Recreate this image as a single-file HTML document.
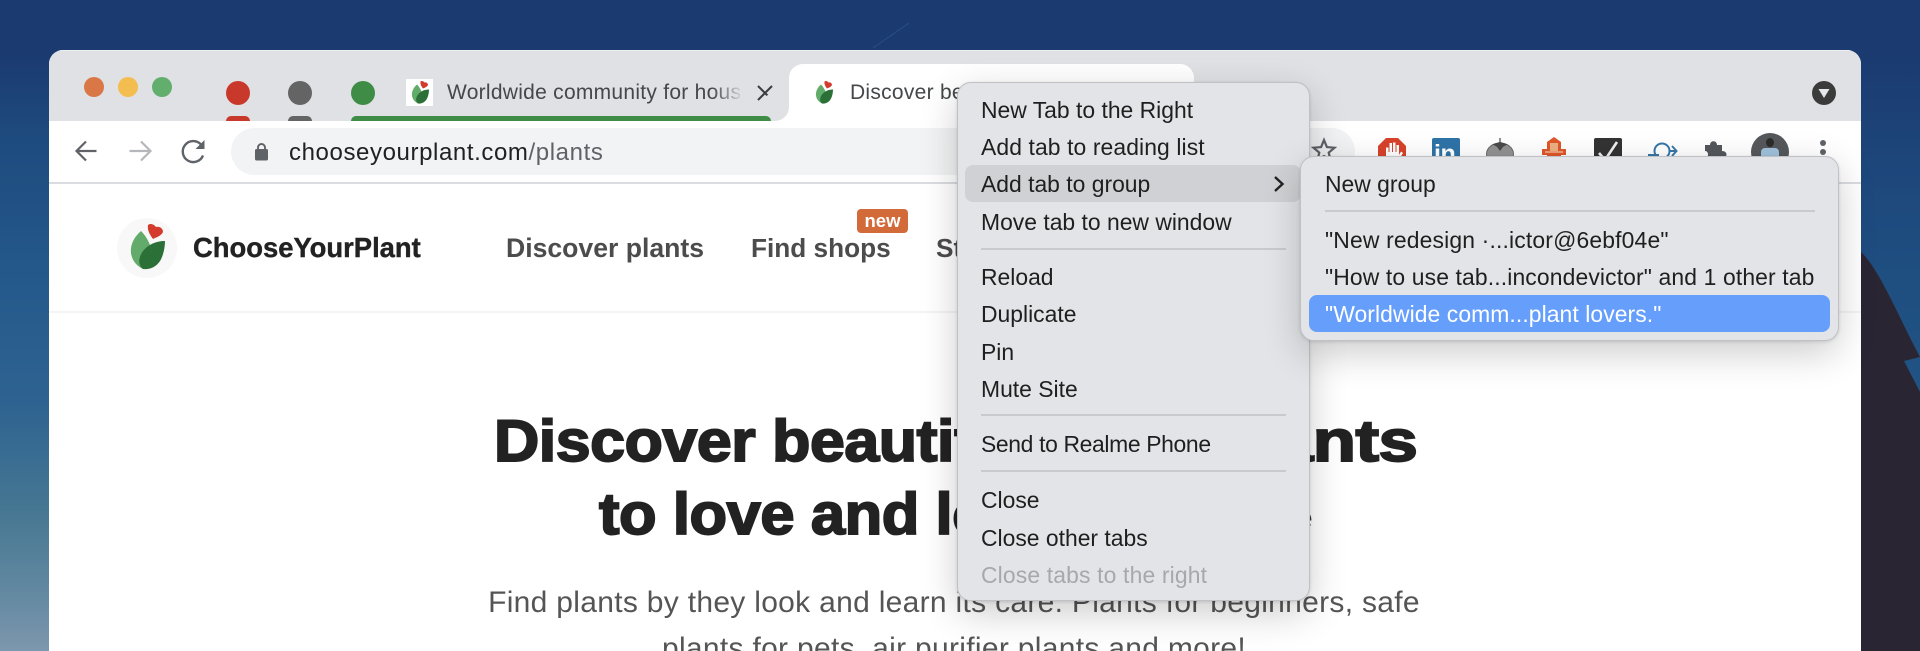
<!DOCTYPE html>
<html lang="en">
<head>
<meta charset="utf-8">
<title>ChooseYourPlant</title>
<style>
html,body{margin:0;padding:0;width:1920px;height:651px;overflow:hidden;background:#1a3a70}
body{position:relative;font-family:"Liberation Sans",Arial,sans-serif}
.a{position:absolute;white-space:nowrap}
svg{position:absolute;overflow:visible}
#win{position:absolute;left:49px;top:50px;width:1812px;height:601px;background:#fff;border-radius:14px 14px 0 0;overflow:hidden}
.t{position:absolute;white-space:nowrap;line-height:30px;color:#1f1f1f;font-size:22.9px}
.sep{position:absolute;height:2px;background:#c9cacd}
.menu{position:absolute;background:#e2e4e7;border:1px solid #c0c1c4;box-sizing:border-box;border-radius:14px;box-shadow:0 12px 38px rgba(0,0,0,.2),0 1px 3px rgba(0,0,0,.12)}
.h{font-size:58px;font-weight:bold;line-height:70px;color:#222;-webkit-text-stroke:1.9px #222;letter-spacing:-.4px}
</style>
</head>
<body>
<!-- wallpaper -->
<svg style="left:0;top:0;overflow:hidden" width="1920" height="651" viewBox="0 0 1920 651">
<defs>
<linearGradient id="l" x1="0" y1="0" x2="0" y2="1">
<stop offset="0" stop-color="#1a3a70"/><stop offset=".08" stop-color="#1a3a70"/><stop offset=".2" stop-color="#1e4a7e"/><stop offset=".45" stop-color="#255a8c"/><stop offset=".62" stop-color="#2e6391"/><stop offset=".78" stop-color="#457692"/><stop offset=".92" stop-color="#658aa2"/><stop offset="1" stop-color="#7d97ae"/>
</linearGradient>
<linearGradient id="r" x1="0" y1="0" x2="0" y2="1">
<stop offset="0" stop-color="#1a3a70"/><stop offset=".13" stop-color="#1a3a70"/><stop offset=".5" stop-color="#1e4a7e"/><stop offset="1" stop-color="#205484"/>
</linearGradient>
</defs>
<rect width="1920" height="651" fill="#1a3a70"/>
<rect x="0" y="0" width="49" height="651" fill="url(#l)"/>
<rect x="1861" y="0" width="59" height="400" fill="url(#r)"/>
<path d="M1861 252C1880 270 1900 320 1920 357L1904 361L1920 392V651H1861Z" fill="#292532"/>
<path d="M873 48L909 23" stroke="#2a4f85" stroke-width="1" fill="none"/>
</svg>

<div id="win">
  <div style="position:absolute;left:0;top:0;width:1812px;height:71px;background:#dfe1e5;border-top:1px solid #eceef0;box-sizing:border-box"></div>
  <div style="position:absolute;left:0;top:71px;width:1812px;height:61px;background:#fff"></div>
  <div style="position:absolute;left:0;top:132px;width:1812px;height:2px;background:#dadce0"></div>
  <div style="position:absolute;left:0;top:261px;width:1812px;height:2px;background:#f4f4f4"></div>
</div>

<!-- traffic lights -->
<div class="a" style="left:84px;top:77px;width:20px;height:20px;border-radius:50%;background:#da7747"></div>
<div class="a" style="left:118px;top:77px;width:20px;height:20px;border-radius:50%;background:#f4bd4f"></div>
<div class="a" style="left:152px;top:77px;width:20px;height:20px;border-radius:50%;background:#62ae6c"></div>

<!-- tab groups -->
<div class="a" style="left:226px;top:81px;width:24px;height:24px;border-radius:50%;background:#c9392b"></div>
<div class="a" style="left:288px;top:81px;width:24px;height:24px;border-radius:50%;background:#646464"></div>
<div class="a" style="left:351px;top:81px;width:24px;height:24px;border-radius:50%;background:#3f8c47"></div>
<div class="a" style="left:226px;top:116px;width:24px;height:5px;border-radius:6px 6px 0 0;background:#c9392b"></div>
<div class="a" style="left:288px;top:116px;width:24px;height:5px;border-radius:6px 6px 0 0;background:#646464"></div>

<!-- inactive tab -->
<div class="a" style="left:406px;top:79px;width:27px;height:27px;background:#fff"></div>
<svg style="left:405px;top:78px" width="30" height="30" viewBox="0 0 60 60">
  <path d="M24 13C17 19 13 27 14 35C15 43 20 48 26 51L34 30C32 23 28 17 24 13Z" fill="#62ab6b"/>
  <path d="M48 23C38 23 31 27 26 33C21 40 21 47 26 51C35 52 42 47 45 39C47 34 48 28 48 23Z" fill="#2a7037"/>
  <path d="M31 7C33 5 37 6 39 9C42 8 46 10 46 14C44 18 40 19 36 21C33 17 30 12 31 7Z" fill="#d33c2c"/>
</svg>
<div class="a" style="left:447px;top:78px;width:296px;overflow:hidden;font-size:21px;letter-spacing:.27px;line-height:30px;color:#454749">Worldwide community for hous</div>
<div class="a" style="left:712px;top:78px;width:32px;height:30px;background:linear-gradient(90deg,rgba(223,225,229,0),#dfe1e5)"></div>
<svg style="left:756.5px;top:85px" width="16" height="16" viewBox="0 0 16 16"><path d="M1 1L15 15M15 1L1 15" stroke="#3c3e41" stroke-width="2.1" fill="none"/></svg>

<!-- active tab -->
<div class="a" style="left:775px;top:107px;width:14px;height:14px;background:#fff"></div>
<div class="a" style="left:761px;top:93px;width:28px;height:28px;border-radius:50%;background:#dfe1e5"></div>
<div class="a" style="left:351px;top:116px;width:420px;height:5px;border-radius:6px 6px 0 0;background:#3f8c47"></div>
<div class="a" style="left:789px;top:64px;width:405px;height:57px;background:#fff;border-radius:14px 14px 0 0"></div>
<svg style="left:809px;top:78px" width="30" height="30" viewBox="0 0 60 60">
  <path d="M24 13C17 19 13 27 14 35C15 43 20 48 26 51L34 30C32 23 28 17 24 13Z" fill="#62ab6b"/>
  <path d="M48 23C38 23 31 27 26 33C21 40 21 47 26 51C35 52 42 47 45 39C47 34 48 28 48 23Z" fill="#2a7037"/>
  <path d="M31 7C33 5 37 6 39 9C42 8 46 10 46 14C44 18 40 19 36 21C33 17 30 12 31 7Z" fill="#d33c2c"/>
</svg>
<div class="a" style="left:850px;top:78px;font-size:21px;letter-spacing:.27px;line-height:30px;color:#454749">Discover beautiful</div>

<!-- tab search button -->
<div class="a" style="left:1812px;top:81px;width:24px;height:24px;border-radius:50%;background:#3b3b3b"></div>
<svg style="left:1812px;top:81px" width="24" height="24" viewBox="0 0 24 24"><path d="M6.500 8H17.500L12 17Z" fill="#e6e7ea"/></svg>

<!-- toolbar -->
<svg style="left:70px;top:135px" width="140" height="32" viewBox="0 0 140 32">
  <path d="M26.500 16H7M16 6.500L6.500 16L16 25.500" stroke="#5f6368" stroke-width="2.200" fill="none"/>
  <path d="M59.500 16H80M71 6.500L80.500 16L71 25.500" stroke="#b5b7ba" stroke-width="2.200" fill="none"/>
  <path d="M133 20.500A10.500 10.500 0 1 1 131 9.500" stroke="#5f6368" stroke-width="2.400" fill="none"/>
  <path d="M134.500 5V14H125.500Z" fill="#5f6368"/>
</svg>
<div class="a" style="left:231px;top:128px;width:1124px;height:47px;border-radius:24px;background:#f1f3f4"></div>
<svg style="left:253px;top:141px" width="17" height="20" viewBox="0 0 17 20">
  <path d="M5 9V6.500A3.500 3.500 0 0 1 12 6.500V9" stroke="#5f6368" stroke-width="1.900" fill="none"/>
  <rect x="2" y="8" width="13" height="11.500" rx="1.600" fill="#5f6368"/>
</svg>
<div class="a" style="left:289px;top:137px;font-size:24px;letter-spacing:.6px;line-height:32px;color:#202124">chooseyourplant.com<span style="color:#5f6368">/plants</span></div>

<!-- star -->
<svg style="left:1311px;top:137px" width="26" height="26" viewBox="0 0 26 26"><path d="M13 3L15.900 10.100L23.500 10.700L17.700 15.600L19.500 23L13 19L6.500 23L8.300 15.600L2.500 10.700L10.100 10.100Z" stroke="#5f6368" stroke-width="2.200" fill="none"/></svg>

<!-- extensions -->
<svg style="left:1378px;top:138px" width="28" height="28" viewBox="0 0 28 28">
  <path d="M8 0H20L28 8V20L20 28H8L0 20V8Z" fill="#d8432a"/>
  <path d="M8 24V9.500H10.500V14H11.500V5H14V14H15V4.500H17.500V14H18.500V7H21V17L23 13.500L25 15L19 25H9Z" fill="#fff"/>
</svg>
<div class="a" style="left:1432px;top:138px;width:28px;height:28px;background:#2e73a8;border-radius:2px"></div>
<div class="a" style="left:1434px;top:140px;font-size:25px;font-weight:bold;line-height:28px;color:#fff;letter-spacing:-.5px">in</div>
<svg style="left:1485px;top:136px" width="30" height="30" viewBox="0 0 30 30">
  <ellipse cx="15" cy="18" rx="13.500" ry="11" fill="#929292" stroke="#666" stroke-width="1"/>
  <path d="M15 2V7M9 8.500L15 6.500L21 8.500L17.500 10.500L15 14L12.500 10.500Z" stroke="#4a4a4a" stroke-width="1.200" fill="#4a4a4a"/>
</svg>
<svg style="left:1541px;top:137px" width="26" height="28" viewBox="0 0 26 28">
  <path d="M13 0L20 5V12H25V18H20V28H6V18H1V12H6V5Z" fill="#e0572b"/>
  <rect x="9" y="6" width="8" height="8" fill="#eeb081"/>
  <path d="M4 15H22M8 20H18" stroke="#f4c9a6" stroke-width="1.300"/>
</svg>
<div class="a" style="left:1594px;top:138px;width:28px;height:28px;background:#333;border-radius:2px"></div>
<svg style="left:1594px;top:138px" width="28" height="28" viewBox="0 0 28 28"><path d="M5 15L11 22L23 4" stroke="#f0f0f0" stroke-width="2.600" fill="none"/></svg>
<svg style="left:1648px;top:138px" width="30" height="26" viewBox="0 0 30 26">
  <circle cx="14" cy="13" r="7.500" stroke="#3877a8" stroke-width="2" fill="none"/>
  <path d="M0 17H11M21 13H29M24 8L28.500 13L24 18" stroke="#3877a8" stroke-width="2" fill="none"/>
</svg>
<svg style="left:1702px;top:139px" width="28" height="28" viewBox="0 0 28 28">
  <path d="M3 6H8C8 1 15 1 15 6H20V12C26 12 26 19 20 19V26H3V19C7 19 7 12 3 12Z" fill="#54575b"/>
</svg>
<div class="a" style="left:1751px;top:133px;width:38px;height:38px;border-radius:50%;background:#55585b;overflow:hidden">
  <div style="position:absolute;left:15px;top:5px;width:8px;height:9px;border-radius:50%;background:#2b2b2b"></div>
  <div style="position:absolute;left:10px;top:15px;width:18px;height:23px;border-radius:4px 4px 0 0;background:#9fc2dc"></div>
</div>
<div class="a" style="left:1820px;top:140px;width:6px;height:6px;border-radius:50%;background:#5f6368"></div>
<div class="a" style="left:1820px;top:149px;width:6px;height:6px;border-radius:50%;background:#5f6368"></div>

<!-- site header -->
<div class="a" style="left:117px;top:218px;width:60px;height:60px;border-radius:50%;background:#f8f8f8"></div>
<svg style="left:117px;top:218px" width="60" height="60" viewBox="0 0 60 60">
  <path d="M24 13C17 19 13 27 14 35C15 43 20 48 26 51L34 30C32 23 28 17 24 13Z" fill="#62ab6b"/>
  <path d="M48 23C38 23 31 27 26 33C21 40 21 47 26 51C35 52 42 47 45 39C47 34 48 28 48 23Z" fill="#2a7037"/>
  <path d="M31 7C33 5 37 6 39 9C42 8 46 10 46 14C44 18 40 19 36 21C33 17 30 12 31 7Z" fill="#d33c2c"/>
</svg>
<div class="a" style="left:193px;top:232px;font-size:27.400px;font-weight:bold;line-height:32px;color:#222;-webkit-text-stroke:.4px #222">ChooseYourPlant</div>
<div class="a" style="left:506px;top:232px;font-size:26.600px;font-weight:bold;line-height:32px;color:#4c4c4c">Discover plants</div>
<div class="a" style="left:751px;top:232px;font-size:26.200px;font-weight:bold;line-height:32px;color:#4c4c4c">Find shops</div>
<div class="a" style="left:936px;top:232px;font-size:26.200px;font-weight:bold;line-height:32px;color:#4c4c4c">Stores</div>
<div class="a" style="left:857px;top:209px;width:51px;height:24px;border-radius:4px;background:#d26a3a;color:#fff;font-size:18.500px;font-weight:bold;line-height:24px;text-align:center">new</div>

<!-- hero -->
<div class="a h" style="left:494px;top:407px;transform:scaleX(1.08);transform-origin:0 0">Discover beautiful</div>
<div class="a h" style="right:503px;top:407px;transform:scaleX(1.22);transform-origin:100% 0">plants</div>
<div class="a h" style="left:599px;top:480px;transform:scaleX(1.06);transform-origin:0 0">to love and look</div>
<div class="a" style="left:1309px;top:509px;width:3px;height:19px;overflow:hidden;font-size:30px;line-height:19px;color:#333"><span style="margin-left:-13px">e</span></div>
<div class="a" style="left:0;width:1908px;top:580px;height:71px;overflow:hidden;text-align:center;font-size:30px;letter-spacing:.3px;line-height:46px;color:#555;white-space:normal">Find plants by they look and learn its care. Plants for beginners, safe<br>plants for pets, air purifier plants and more!</div>

<!-- context menu -->
<div class="menu" style="left:957px;top:82px;width:353px;height:519px"></div>
<div class="a" style="left:965px;top:165px;width:336px;height:37px;border-radius:8px;background:#d0d1d4"></div>
<div class="t" style="left:981px;top:95px">New Tab to the Right</div>
<div class="t" style="left:981px;top:132px;letter-spacing:.1px">Add tab to reading list</div>
<div class="t" style="left:981px;top:169px">Add tab to group</div>
<div class="t" style="left:981px;top:207px">Move tab to new window</div>
<div class="sep" style="left:981px;top:248px;width:305px"></div>
<div class="t" style="left:981px;top:262px">Reload</div>
<div class="t" style="left:981px;top:299px">Duplicate</div>
<div class="t" style="left:981px;top:337px">Pin</div>
<div class="t" style="left:981px;top:374px">Mute Site</div>
<div class="sep" style="left:981px;top:414px;width:305px"></div>
<div class="t" style="left:981px;top:429px;letter-spacing:-.35px">Send to Realme Phone</div>
<div class="sep" style="left:981px;top:470px;width:305px"></div>
<div class="t" style="left:981px;top:485px">Close</div>
<div class="t" style="left:981px;top:523px">Close other tabs</div>
<div class="t" style="left:981px;top:560px;color:#a6a8ab;letter-spacing:.15px">Close tabs to the right</div>
<svg style="left:1273px;top:176px" width="12" height="16" viewBox="0 0 12 16"><path d="M2 1L9.500 8L2 15" stroke="#222" stroke-width="2.400" fill="none"/></svg>

<!-- submenu -->
<div class="menu" style="left:1300px;top:156px;width:539px;height:185px"></div>
<div class="t" style="left:1325px;top:169px">New group</div>
<div class="sep" style="left:1325px;top:210px;width:490px"></div>
<div class="t" style="left:1325px;top:225px;letter-spacing:.16px">"New redesign ·...ictor@6ebf04e"</div>
<div class="t" style="left:1325px;top:262px;letter-spacing:.13px">"How to use tab...incondevictor" and 1 other tab</div>
<div class="a" style="left:1309px;top:295px;width:521px;height:37px;border-radius:8px;background:#659ffb"></div>
<div class="t" style="left:1325px;top:299px;color:#fff;letter-spacing:.08px">"Worldwide comm...plant lovers."</div>
</body>
</html>
